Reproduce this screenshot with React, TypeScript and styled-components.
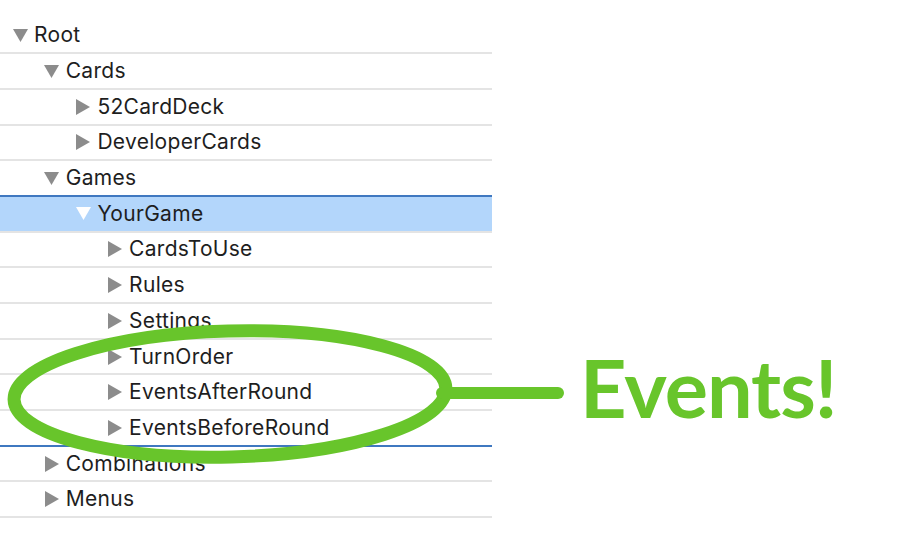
import React from "react";
import styled, { createGlobalStyle } from "styled-components";

const Global = createGlobalStyle`
  html, body { margin: 0; padding: 0; background: #ffffff; }
  body { font-family: Inter, "Noto Sans", Roboto, sans-serif; }
`;

const Page = styled.div`
  position: relative;
  width: 910px;
  height: 556px;
  overflow: hidden;
  background: #fff;
`;

const Tree = styled.div`
  display: flex;
  flex-direction: column;
  width: 492px;
  padding-top: 18.5px;
`;

const Row = styled.div<{ $depth: number; $selected?: boolean; $drop?: boolean }>`
  display: flex;
  align-items: center;
  box-sizing: border-box;
  height: 35.7px;
  padding-left: ${(p) => 12 + p.$depth * 31.7}px;
  background: ${(p) => (p.$selected ? "#b3d6fb" : "transparent")};
  border-bottom: 2px solid ${(p) => (p.$drop ? "#3f78c0" : "#e4e4e4")};
  color: #1e1e1e;
  font-size: 21px;
  letter-spacing: 0.3px;
`;

const SelectedTop = styled.div`
  height: 0;
  border-top: 2px solid #3f78c0;
  margin-top: -2px;
`;

const Disclosure = styled.span`
  display: inline-flex;
  align-items: center;
  justify-content: center;
  width: 16px;
  margin-right: 6px;
  flex: none;
`;

const Label = styled.span`
  line-height: 1;
  padding-bottom: 1px;
`;

const Overlay = styled.svg`
  position: absolute;
  left: 0;
  top: 0;
  pointer-events: none;
`;

const Callout = styled.div`
  position: absolute;
  left: 580px;
  top: 346px;
  font-family: Lato, "Open Sans", sans-serif;
  font-weight: 700;
  font-size: 81px;
  line-height: 1;
  color: #68c52b;
  letter-spacing: -1px;
`;

type Node = { label: string; depth: number; open?: boolean; selected?: boolean; drop?: boolean };

const nodes: Node[] = [
  { label: "Root", depth: 0, open: true },
  { label: "Cards", depth: 1, open: true },
  { label: "52CardDeck", depth: 2 },
  { label: "DeveloperCards", depth: 2 },
  { label: "Games", depth: 1, open: true },
  { label: "YourGame", depth: 2, open: true, selected: true },
  { label: "CardsToUse", depth: 3 },
  { label: "Rules", depth: 3 },
  { label: "Settings", depth: 3 },
  { label: "TurnOrder", depth: 3 },
  { label: "EventsAfterRound", depth: 3 },
  { label: "EventsBeforeRound", depth: 3, drop: true },
  { label: "Combinations", depth: 1 },
  { label: "Menus", depth: 1 },
];

function Triangle({ open, light }: { open?: boolean; light?: boolean }) {
  const fill = light ? "#ffffff" : "#8c8c8c";
  return open ? (
    <svg width="15" height="13" viewBox="0 0 15 13">
      <polygon points="0,0 15,0 7.5,13" fill={fill} />
    </svg>
  ) : (
    <svg width="14" height="16" viewBox="0 0 14 16">
      <polygon points="0,0 14,8 0,16" fill={fill} />
    </svg>
  );
}

export default function App() {
  return (
    <Page>
      <Global />
      <Tree>
        {nodes.map((n) => (
          <React.Fragment key={n.label}>
            {n.selected && <SelectedTop />}
            <Row $depth={n.depth} $selected={n.selected} $drop={n.drop}>
              <Disclosure>
                <Triangle open={n.open} light={n.selected} />
              </Disclosure>
              <Label>{n.label}</Label>
            </Row>
          </React.Fragment>
        ))}
      </Tree>
      <Overlay width="910" height="556" viewBox="0 0 910 556">
        <ellipse
          cx="230"
          cy="394"
          rx="216"
          ry="63"
          transform="rotate(-1.5 230 394)"
          fill="none"
          stroke="#68c52b"
          strokeWidth="13"
        />
        <line x1="442" y1="393" x2="558" y2="393" stroke="#68c52b" strokeWidth="12" strokeLinecap="round" />
      </Overlay>
      <Callout>Events!</Callout>
    </Page>
  );
}
